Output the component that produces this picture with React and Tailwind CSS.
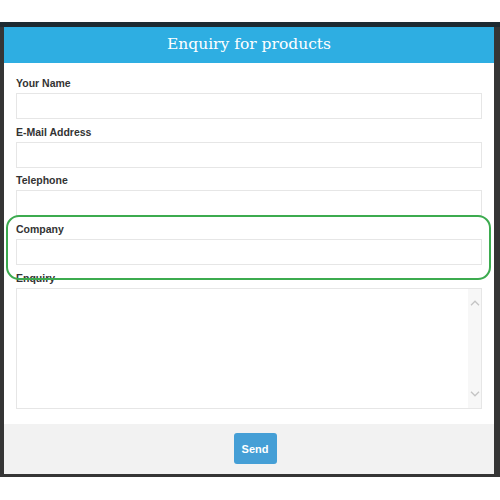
import React from 'react';

function Field({ label, children }) {
    return (
        <div className="flex flex-col">
            <label className="text-[10.5px] font-bold leading-[16px] text-[#333] mb-[2px]">{label}</label>
            {children}
        </div>
    );
}

function TextInput() {
    return <input type="text" className="h-[26px] w-full border border-[#e6e6e6] bg-white outline-none" />;
}

export default function App() {
    return (
        <div className="w-[500px] h-[500px] bg-white font-['Liberation_Sans',Arial,sans-serif]">
            <div className="h-[22px]" />
            <div className="h-[455px] bg-[#353535] flex flex-col">
                <div className="h-[5px] bg-[#1d2a31]" />
                <div className="relative ml-[4px] w-[490px] flex flex-col bg-white">
                    {/* header */}
                    <div className="h-[36px] bg-[#2eaee2] flex items-center justify-center">
                        <h2 className="text-[15.5px] text-white font-['DejaVu_Serif',serif] leading-none">
                            Enquiry for products
                        </h2>
                    </div>

                    {/* body */}
                    <div className="px-[12px] pt-[12px] pb-[15px] flex flex-col gap-[4.7px]">
                        <Field label="Your Name"><TextInput /></Field>
                        <Field label="E-Mail Address"><TextInput /></Field>
                        <Field label="Telephone"><TextInput /></Field>
                        <Field label="Company"><TextInput /></Field>
                        <Field label="Enquiry">
                            <div className="h-[121px] w-full border border-[#e6e6e6] bg-white flex">
                                <div className="flex-1" />
                                <div className="w-[13px] bg-[#f7f7f7] flex flex-col items-center justify-between py-[11px]">
                                    <svg width="10" height="6" viewBox="0 0 10 6" fill="none" stroke="#c4c4c4" strokeWidth="1.3">
                                        <path d="M1 5.2 L5 1.2 L9 5.2" />
                                    </svg>
                                    <svg width="10" height="6" viewBox="0 0 10 6" fill="none" stroke="#c4c4c4" strokeWidth="1.3">
                                        <path d="M1 0.8 L5 4.8 L9 0.8" />
                                    </svg>
                                </div>
                            </div>
                        </Field>
                    </div>

                    {/* footer */}
                    <div className="h-[50px] bg-[#f2f2f2] flex items-center justify-center">
                        <button className="ml-[12px] h-[31px] w-[43px] rounded-[3px] bg-[#459fd6] text-white text-[11px] font-bold">
                            Send
                        </button>
                    </div>

                    {/* annotation highlight */}
                    <div className="absolute left-[2px] top-[188px] w-[485px] h-[65px] rounded-[13px] border-2 border-[#3cab4f] pointer-events-none" />
                </div>
            </div>
        </div>
    );
}
